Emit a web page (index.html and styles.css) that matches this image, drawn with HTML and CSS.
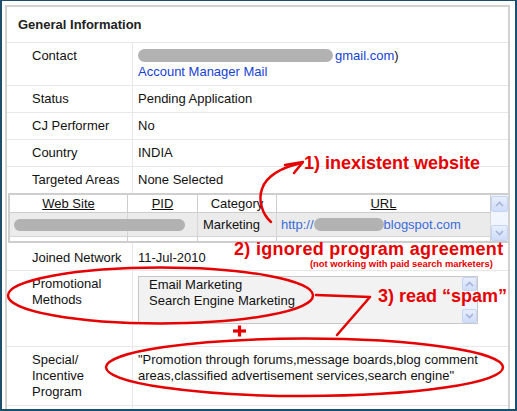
FILE: index.html
```html
<!DOCTYPE html>
<html>
<head>
<meta charset="utf-8">
<title>General Information</title>
<link rel="stylesheet" href="styles.css">
</head>
<body>
<div class="frame">
  <div class="panel">
    <div class="panel-head">General Information</div>

    <div class="row">
      <div class="lbl">Contact</div>
      <div class="val">
        <div><span class="blur email-blur"></span><a class="link">gmail.com</a>)</div>
        <div><a class="link">Account Manager Mail</a></div>
      </div>
    </div>
    <div class="row"><div class="lbl">Status</div><div class="val">Pending Application</div></div>
    <div class="row"><div class="lbl">CJ Performer</div><div class="val">No</div></div>
    <div class="row"><div class="lbl">Country</div><div class="val">INDIA</div></div>
    <div class="row row-flat"><div class="lbl">Targeted Areas</div><div class="val">None Selected</div></div>

    <div class="sites">
      <div class="sites-grid">
        <div class="th"><u>Web Site</u></div>
        <div class="th"><u>PID</u></div>
        <div class="th">Category</div>
        <div class="th"><u>URL</u></div>

        <div class="td"><span class="blur site-blur"></span></div>
        <div class="td"></div>
        <div class="td">Marketing</div>
        <div class="td"><a class="url">http://<span class="blur url-blur"></span>blogspot.com</a></div>

        <div class="tf"></div>
        <div class="tf"></div>
        <div class="tf"></div>
        <div class="tf"></div>
      </div>
      <div class="vscroll">
        <div class="sbtn">
          <svg width="9" height="6" viewBox="0 0 9 6"><polyline points="1,5 4.5,1.5 8,5" fill="none" stroke="#a3b4d8" stroke-width="1.6"/></svg>
        </div>
        <div class="sbtn">
          <svg width="9" height="6" viewBox="0 0 9 6"><polyline points="1,1 4.5,4.5 8,1" fill="none" stroke="#a3b4d8" stroke-width="1.6"/></svg>
        </div>
      </div>
    </div>

    <div class="row row-joined"><div class="lbl">Joined Network</div><div class="val">11-Jul-2010</div></div>

    <div class="row">
      <div class="lbl">Promotional<br>Methods</div>
      <div class="val val-list">
        <div class="listbox">
          <div class="options">
            <div>Email Marketing</div>
            <div>Search Engine Marketing</div>
          </div>
          <div class="vscroll small">
            <div class="sbtn">
              <svg width="9" height="6" viewBox="0 0 9 6"><polyline points="1,5 4.5,1.5 8,5" fill="none" stroke="#a3b4d8" stroke-width="1.6"/></svg>
            </div>
            <div class="sbtn">
              <svg width="9" height="6" viewBox="0 0 9 6"><polyline points="1,1 4.5,4.5 8,1" fill="none" stroke="#a3b4d8" stroke-width="1.6"/></svg>
            </div>
          </div>
        </div>
      </div>
    </div>

    <div class="row">
      <div class="lbl">Special/<br>Incentive<br>Program</div>
      <div class="val">"Promotion through forums,message boards,blog comment<br>areas,classified advertisement services,search engine"</div>
    </div>

    <div class="row row-empty"><div class="lbl"></div><div class="val"></div></div>
  </div>
</div>

<svg class="marks" width="517" height="411" viewBox="0 0 517 411">
  <g fill="none" stroke="#e60000" stroke-width="2.5" stroke-linecap="round" stroke-linejoin="round">
    <ellipse cx="160.5" cy="295.5" rx="152.5" ry="28"/>
    <ellipse cx="304.5" cy="367.3" rx="198.5" ry="28.7"/>
    <polyline points="316,295 370,297 337,335"/>
    <path d="M271,222 C262,214 258,200 262,189 C266,176 282,167 302,163"/>
    <polyline points="285,165 303,162 294,173"/>
  </g>
  <g stroke="#e60000" stroke-width="3.2">
    <line x1="233" y1="331" x2="246" y2="331"/>
    <line x1="239.5" y1="325.5" x2="239.5" y2="336.5"/>
  </g>
</svg>
<span class="note n1">1) inexistent website</span>
<span class="note n2">2) ignored program agreement</span>
<span class="note small n3">(not working with paid search marketers)</span>
<span class="note n4">3) read “spam”</span>
</body>
</html>
```

FILE: styles.css
```css
* { box-sizing: border-box; }

html, body {
  margin: 0;
  padding: 0;
  background: #ffffff;
}

body {
  position: relative;
  width: 517px;
  height: 411px;
  overflow: hidden;
  font-family: "Liberation Sans", Arial, sans-serif;
  font-size: 13px;
  color: #111;
}

.frame {
  width: 517px;
  height: 411px;
  border: 2px solid #1d4e6e;
  border-top-width: 1px;
  padding: 4px 0 0 3px;
  overflow: hidden;
  background: #fff;
}

.panel {
  width: 505px;
  border: 2px solid #d2d2d2;
  border-bottom: 0;
}

.panel-head {
  height: 36px;
  line-height: 35px;
  padding-left: 11px;
  font-weight: bold;
  color: #222;
  border-bottom: 1px solid #e8e8e8;
}

.row {
  display: grid;
  grid-template-columns: 126px 1fr;
  border-bottom: 1px solid #e8e8e8;
  line-height: 16px;
}

.row-flat { border-bottom: 0; }

.lbl {
  padding: 5px 0 5px 25px;
  border-right: 1px solid #e8e8e8;
}

.val {
  padding: 5px 0 5px 5px;
}

.row-joined .lbl,
.row-joined .val { padding-top: 7px; padding-bottom: 4px; }

.row-empty { height: 20px; border-bottom: 0; }

.link { color: #1642d4; text-decoration: none; }
.url { color: #3a6cd8; text-decoration: none; }

.blur {
  display: inline-block;
  background: #b2b2b2;
  border-radius: 7px;
  filter: blur(0.6px);
  vertical-align: middle;
}

.email-blur {
  width: 195px;
  height: 13px;
  margin-right: 2px;
  position: relative;
  top: -1px;
}

.site-blur {
  position: relative;
  z-index: 1;
  width: 171px;
  height: 12px;
  top: -1px;
}

.url-blur {
  width: 70px;
  height: 13px;
  top: -1px;
  position: relative;
}

/* websites sub-table */
.sites {
  display: flex;
  margin-left: 1px;
  border: 2px solid #cecece;
  border-right: 0;
  height: 50px;
}

.sites-grid {
  flex: 1;
  display: grid;
  grid-template-columns: 118px 70px 79px 1fr;
  grid-template-rows: 18px 24px 4px;
}

.th, .td, .tf {
  border-right: 1px solid #cdcdcd;
  white-space: nowrap;
}

.th {
  text-align: center;
  line-height: 17px;
  border-bottom: 1px solid #cdcdcd;
  background: #fff;
}

.td {
  background: #ebebeb;
  line-height: 23px;
  padding-left: 5px;
  border-bottom: 1px solid #d4d4d4;
  border-right-color: #d6d6d6;
}

.td:first-child { padding-left: 4px; }
.sites-grid .td:nth-child(5) { padding-left: 4px; }
.sites-grid .td:nth-child(8) { padding-left: 4px; }

.tf { background: #fff; }

.vscroll {
  width: 17px;
  display: flex;
  flex-direction: column;
  justify-content: space-between;
  background: #f1f5fd;
  padding: 1px 0 0 0;
}

.sbtn {
  height: 16px;
  display: flex;
  align-items: center;
  justify-content: center;
  border: 1px solid #c6d5f6;
  border-radius: 2px;
  background: linear-gradient(#e7eefd, #cfdcf8);
}

.vscroll.small {
  width: 15px;
  padding: 0;
}

.vscroll.small .sbtn { height: 14px; }

/* listbox */
.val-list {
  padding: 5px 0 22px 5px;
}

.listbox {
  display: flex;
  width: 340px;
  height: 48px;
  border: 1px solid #c8c8c8;
  background: #f2f2f2;
}

.options {
  flex: 1;
  padding-left: 10px;
  line-height: 16px;
}

/* annotations */
.marks {
  position: absolute;
  left: 0;
  top: 0;
  pointer-events: none;
}

.note {
  position: absolute;
  color: #e60000;
  font-family: "Liberation Sans", Arial, sans-serif;
  font-weight: bold;
  font-size: 18px;
  line-height: 18px;
  white-space: nowrap;
}

.note.small {
  font-size: 9.4px;
  line-height: 10px;
}

.n1 { left: 304px; top: 154px; }
.n2 { left: 234px; top: 240px; letter-spacing: 0.3px; }
.n3 { left: 310px; top: 259px; }
.n4 { left: 378px; top: 287px; }
```
